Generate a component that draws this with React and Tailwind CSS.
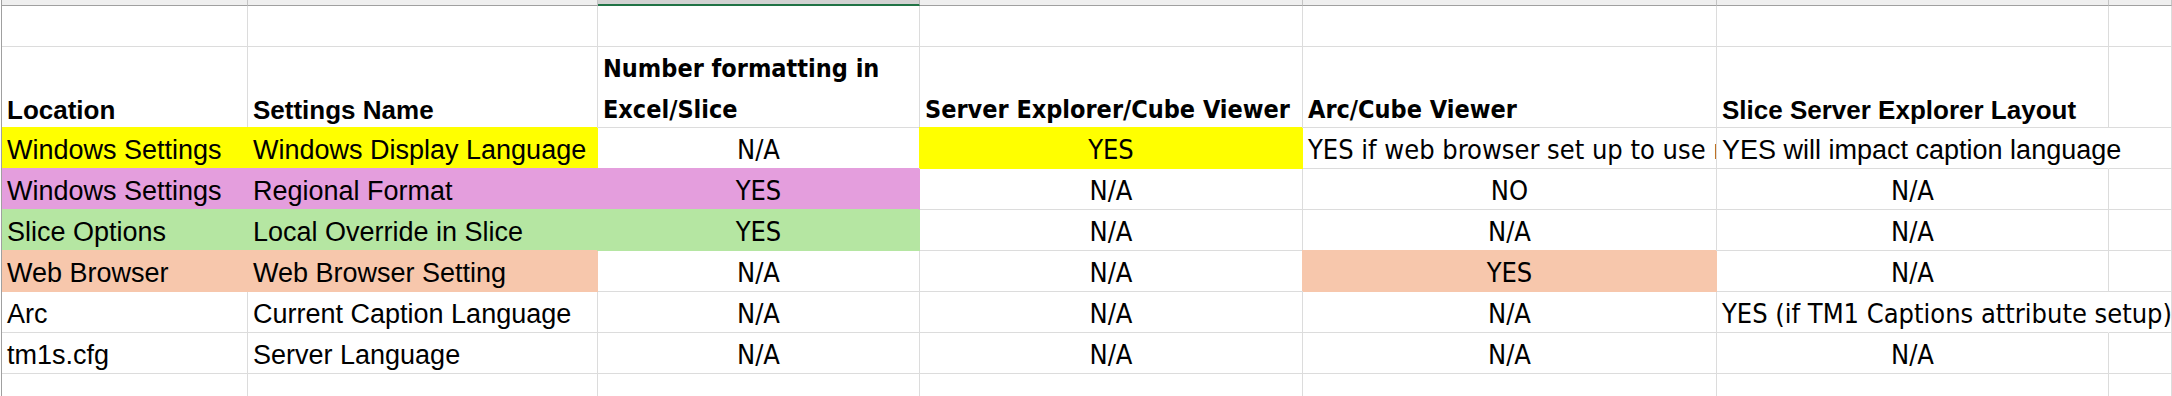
import React from 'react';

const COLS = 'grid-cols-[246px_350px_322px_383px_414px_392px_1fr]';

const SANS = "font-['Liberation_Sans',Arial,sans-serif]";
const NARROW = "font-['DejaVu_Sans_Condensed','Liberation_Sans_Narrow',sans-serif] font-stretch-condensed";

const FILL = {
  y: 'bg-[#ffff00] border-[#ffff00] shadow-[-1px_-1px_0_0_#ffff00]',
  p: 'bg-[#e49edd] border-[#e49edd] shadow-[-1px_-1px_0_0_#e49edd]',
  g: 'bg-[#b5e6a2] border-[#b5e6a2] shadow-[-1px_-1px_0_0_#b5e6a2]',
  o: 'bg-[#f7c7ac] border-[#f7c7ac] shadow-[-1px_-1px_0_0_#f7c7ac]',
};

// first column keeps the sheet's left edge visible, so only cover the line above
const FILL_FIRST = {
  y: 'bg-[#ffff00] border-[#ffff00] shadow-[0_-1px_0_0_#ffff00]',
  p: 'bg-[#e49edd] border-[#e49edd] shadow-[0_-1px_0_0_#e49edd]',
  g: 'bg-[#b5e6a2] border-[#b5e6a2] shadow-[0_-1px_0_0_#b5e6a2]',
  o: 'bg-[#f7c7ac] border-[#f7c7ac] shadow-[0_-1px_0_0_#f7c7ac]',
};

const headers = [
  { t: 'Location' },
  { t: 'Settings Name' },
  { t: 'Number formatting in Excel/Slice', narrow: true, wrap: true },
  { t: 'Server Explorer/Cube Viewer', narrow: true },
  { t: 'Arc/Cube Viewer', narrow: true },
  { t: 'Slice Server Explorer Layout' },
  { t: '' },
];

// n = narrow font, c = centred, f = fill, clip = cut at next cell, open = text runs into next cell
const rows = [
  [
    { t: 'Windows Settings', f: 'y' },
    { t: 'Windows Display Language', f: 'y' },
    { t: 'N/A', n: true, c: true },
    { t: 'YES', n: true, c: true, f: 'y' },
    { t: 'YES if web browser set up to use right language', n: true, clip: true },
    { t: 'YES will impact caption language', open: true },
    { t: '' },
  ],
  [
    { t: 'Windows Settings', f: 'p' },
    { t: 'Regional Format', f: 'p' },
    { t: 'YES', n: true, c: true, f: 'p' },
    { t: 'N/A', n: true, c: true },
    { t: 'NO', n: true, c: true },
    { t: 'N/A', n: true, c: true },
    { t: '' },
  ],
  [
    { t: 'Slice Options', f: 'g' },
    { t: 'Local Override in Slice', f: 'g' },
    { t: 'YES', n: true, c: true, f: 'g' },
    { t: 'N/A', n: true, c: true },
    { t: 'N/A', n: true, c: true },
    { t: 'N/A', n: true, c: true },
    { t: '' },
  ],
  [
    { t: 'Web Browser', f: 'o' },
    { t: 'Web Browser Setting', f: 'o' },
    { t: 'N/A', n: true, c: true },
    { t: 'N/A', n: true, c: true },
    { t: 'YES', n: true, c: true, f: 'o' },
    { t: 'N/A', n: true, c: true },
    { t: '' },
  ],
  [
    { t: 'Arc' },
    { t: 'Current Caption Language' },
    { t: 'N/A', n: true, c: true },
    { t: 'N/A', n: true, c: true },
    { t: 'N/A', n: true, c: true },
    { t: 'YES (if TM1 Captions attribute setup)', n: true, open: true },
    { t: '' },
  ],
  [
    { t: 'tm1s.cfg' },
    { t: 'Server Language' },
    { t: 'N/A', n: true, c: true },
    { t: 'N/A', n: true, c: true },
    { t: 'N/A', n: true, c: true },
    { t: 'N/A', n: true, c: true },
    { t: '' },
  ],
];

const blank = Array.from({ length: 7 });

const DataCell = ({ cell, col }) => {
  const fill = cell.f ? (col === 0 ? FILL_FIRST[cell.f] : FILL[cell.f]) : 'border-[#dcdcdc]';
  return (
    <div
      className={`flex h-[41px] items-end whitespace-nowrap border-r border-b px-[5px] leading-[36px] text-black ${fill} ${
        cell.c ? 'justify-center' : 'justify-start'
      } ${cell.clip ? 'overflow-hidden' : ''} ${cell.open ? 'border-r-transparent' : ''} ${
        cell.n ? `${NARROW} text-[27px]` : `${SANS} text-[27px]`
      }`}
    >
      <span className="shrink-0">{cell.t}</span>
    </div>
  );
};

export default function App() {
  return (
    <div className="h-[396px] w-[2172px] overflow-hidden bg-white">
      <div className={`ml-px grid border-l border-[#a0a0a0] ${COLS}`}>
        {/* column header strip, column C selected */}
        {blank.map((_, i) =>
          i === 2 ? (
            <div key={`s${i}`} className="h-[6px] border-r border-b-2 border-r-[#b4b4b4] border-b-[#217346] bg-[#d2d2d2]" />
          ) : (
            <div key={`s${i}`} className="h-[6px] border-r border-b border-r-[#c4c4c4] border-b-[#a0a0a0] bg-[#efefef]" />
          )
        )}

        {blank.map((_, i) => (
          <div key={`e${i}`} className="h-[41px] border-r border-b border-[#dcdcdc]" />
        ))}

        {headers.map((h, i) => (
          <div
            key={`h${i}`}
            className={`flex h-[81px] items-end border-r border-b border-[#dcdcdc] px-[5px] font-bold text-black ${
              h.narrow ? `${NARROW} text-[25px]` : `${SANS} text-[26px]`
            }`}
          >
            {h.wrap ? (
              <span className="-mb-[3px] leading-[41px]">{h.t}</span>
            ) : (
              <span className="whitespace-nowrap leading-[34px]">{h.t}</span>
            )}
          </div>
        ))}

        {rows.map((row, r) =>
          row.map((cell, c) => <DataCell key={`r${r}c${c}`} cell={cell} col={c} />)
        )}

        {blank.map((_, i) => (
          <div key={`z${i}`} className="h-[41px] border-r border-b border-[#dcdcdc]" />
        ))}
      </div>
    </div>
  );
}
